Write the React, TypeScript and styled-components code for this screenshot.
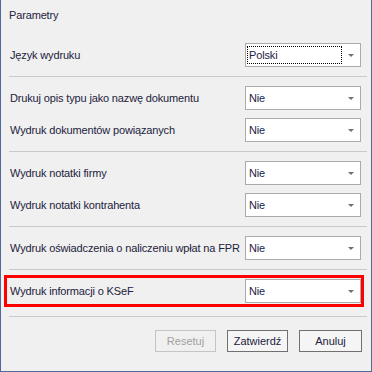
import React from 'react';
import styled, {createGlobalStyle} from 'styled-components';

const GlobalStyle = createGlobalStyle`
	html, body {
		margin: 0;
		padding: 0;
		background: #f0f0f0;
	}
	body {
		font-family: 'Liberation Sans', Arial, sans-serif;
		font-size: 11px;
		letter-spacing: -0.15px;
		color: #22223c;
	}
`;

type Param = {label: string; value: string; focused?: boolean};

const groups: Param[][] = [
	[{label: 'Język wydruku', value: 'Polski', focused: true}],
	[
		{label: 'Drukuj opis typu jako nazwę dokumentu', value: 'Nie'},
		{label: 'Wydruk dokumentów powiązanych', value: 'Nie'},
	],
	[
		{label: 'Wydruk notatki firmy', value: 'Nie'},
		{label: 'Wydruk notatki kontrahenta', value: 'Nie'},
	],
	[{label: 'Wydruk oświadczenia o naliczeniu wpłat na FPR', value: 'Nie'}],
];

export default function App() {
	return (
		<>
			<GlobalStyle />
			<Window>
				<Title>Parametry</Title>
				{groups.map((group, gi) => (
					<React.Fragment key={gi}>
						{gi > 0 && <Separator />}
						<Group>
							{group.map((p) => (
								<Row key={p.label}>
									<Label>{p.label}</Label>
									<Combo value={p.value} focused={p.focused} />
								</Row>
							))}
						</Group>
					</React.Fragment>
				))}
				<Separator />
				<Highlight>
					<Row>
						<Label>Wydruk informacji o KSeF</Label>
						<Combo value='Nie' />
					</Row>
				</Highlight>
				<Separator />
				<Buttons>
					<Button disabled>Resetuj</Button>
					<Button>Zatwierdź</Button>
					<Button $wide>Anuluj</Button>
				</Buttons>
			</Window>
		</>
	);
}

function Combo({value, focused}: {value: string; focused?: boolean}) {
	return (
		<ComboBox>
			<ComboText $focused={focused}>{value}</ComboText>
			<Arrow width='6' height='3' viewBox='0 0 6 3'>
				<path d='M0 0h6l-3 3z' fill='#707070' />
			</Arrow>
		</ComboBox>
	);
}

const Window = styled.div`
	box-sizing: border-box;
	width: 372px;
	height: 372px;
	border: 1px solid #4f6a98;
	border-top: none;
	padding: 0 10px 0 8px;
	display: flex;
	flex-direction: column;
`;

const Title = styled.div`
	height: 30px;
	line-height: 30px;
	margin-bottom: 13px;
`;

const Group = styled.div`
	display: flex;
	flex-direction: column;
	gap: 8px;
`;

const Row = styled.div`
	display: flex;
	align-items: center;
	justify-content: space-between;
	gap: 4px;
	height: 24px;
`;

const Label = styled.span`
	padding-left: 1px;
	white-space: nowrap;
`;

const Separator = styled.div`
	height: 1px;
	background: #c9c9c9;
	margin: 9px 0;
	margin-right: -6px;
`;

const Highlight = styled.div`
	margin: -4px -3px 0 -5px;
	border: 3px solid #ff0000;
	padding: 1px 0 1px 2px;
`;

const ComboBox = styled.div`
	box-sizing: border-box;
	width: 116px;
	height: 24px;
	background: #fff;
	border: 1px solid #ababab;
	display: flex;
	align-items: center;
	padding: 2px 6px 2px 1px;
	flex-shrink: 0;
`;

const ComboText = styled.div<{$focused?: boolean}>`
	flex: 1;
	align-self: stretch;
	display: flex;
	align-items: center;
	padding-left: 1px;
	margin-right: 6px;
	color: #1c1c48;
	border: 1px dotted ${(p) => (p.$focused ? '#000' : 'transparent')};
`;

const Arrow = styled.svg`
	display: block;
`;

const Buttons = styled.div`
	display: flex;
	justify-content: flex-end;
	gap: 10px;
	margin-top: 4px;
	margin-right: -1px;
`;

const Button = styled.button<{$wide?: boolean}>`
	box-sizing: border-box;
	width: ${(p) => (p.$wide ? '63px' : '61px')};
	height: 22px;
	padding: 0;
	font: inherit;
	color: #22223c;
	background: #f5f5f5;
	border: 1px solid #707070;
	&:disabled {
		color: #a0a0a0;
		border-color: #c4c4c4;
		background: #f0f0f0;
	}
	& + & {
		margin-left: 1px;
	}
`;
